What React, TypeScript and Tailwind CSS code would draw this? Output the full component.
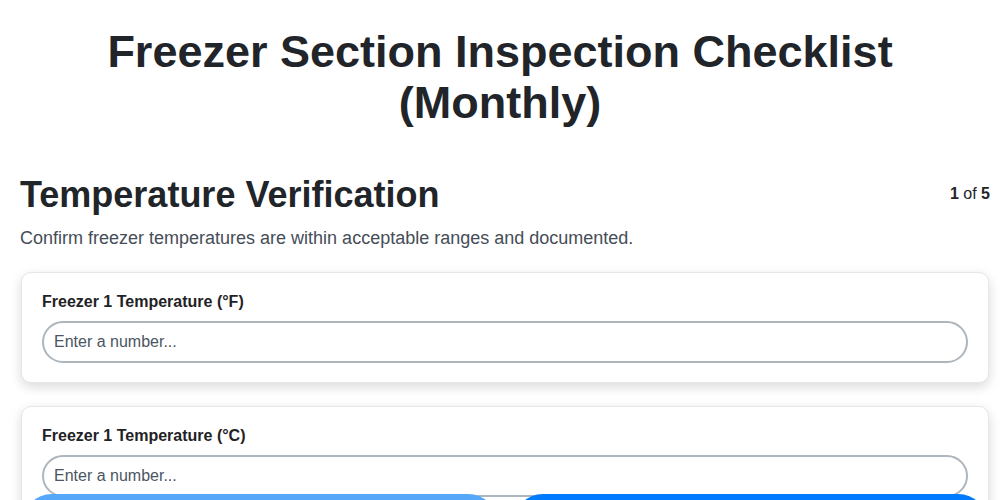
import React, { useState } from 'react'

type Field = {
    id: string;
    label: string;
}

const fields: Field[] = [
    { id: 'f1-f', label: 'Freezer 1 Temperature (°F)' },
    { id: 'f1-c', label: 'Freezer 1 Temperature (°C)' },
];

export default function App() {
    const [values, setValues] = useState<Record<string, string>>({}); // input values by field id

    return (
        <div className="min-h-screen bg-white text-[#212529] font-['Liberation_Sans',Arial,sans-serif]">
            <h1 className="pt-[26px] px-24 text-center text-[45px] leading-[51px] font-bold">
                Freezer Section Inspection Checklist (Monthly)
            </h1>

            <div className="pl-5 pr-2.5 pt-[45px] pb-24">
                <div className="flex items-start justify-between">
                    <h2 className="text-[36px] leading-[44px] font-bold">Temperature Verification</h2>
                    <div className="pt-[9px] text-[16px]">
                        <span className="font-bold">1</span> of <span className="font-bold">5</span>
                    </div>
                </div>
                <p className="mt-[9px] text-[18px] leading-[24px] text-[#454d57]">
                    Confirm freezer temperatures are within acceptable ranges and documented.
                </p>

                <div className="mt-[22px] flex flex-col gap-[23px]">
                    {fields.map((field) => (
                        <div
                            key={field.id}
                            className="mx-px rounded-[10px] border border-[#e6e7ea] bg-white px-5 pt-[19px] pb-[19px] shadow-[0_4px_12px_rgba(0,0,0,0.15)]"
                        >
                            <label className="block text-[16px] leading-[20px] font-bold text-[#1f2326]">{field.label}</label>
                            <input
                                type="text"
                                inputMode="decimal"
                                value={values[field.id] ?? ''}
                                onChange={(e) => setValues({ ...values, [field.id]: e.target.value })}
                                placeholder="Enter a number..."
                                className="mt-[9px] block h-[42px] w-full rounded-full border-2 border-[#adb5bd] px-2.5 text-[16px] text-[#212529] placeholder:text-[#4b5563] outline-none"
                            />
                        </div>
                    ))}
                </div>
            </div>

            {/* nav buttons sit over the page at the bottom */}
            <div className="fixed inset-x-0 -bottom-[54px] flex gap-[15px] pl-[22px] pr-3">
                <button className="h-[60px] flex-1 rounded-full bg-[#55a7fa] pt-8 text-white font-bold">Back</button>
                <button className="h-[60px] flex-1 rounded-full bg-[#007bff] pt-8 text-white font-bold">Next</button>
            </div>
        </div>
    )
}
